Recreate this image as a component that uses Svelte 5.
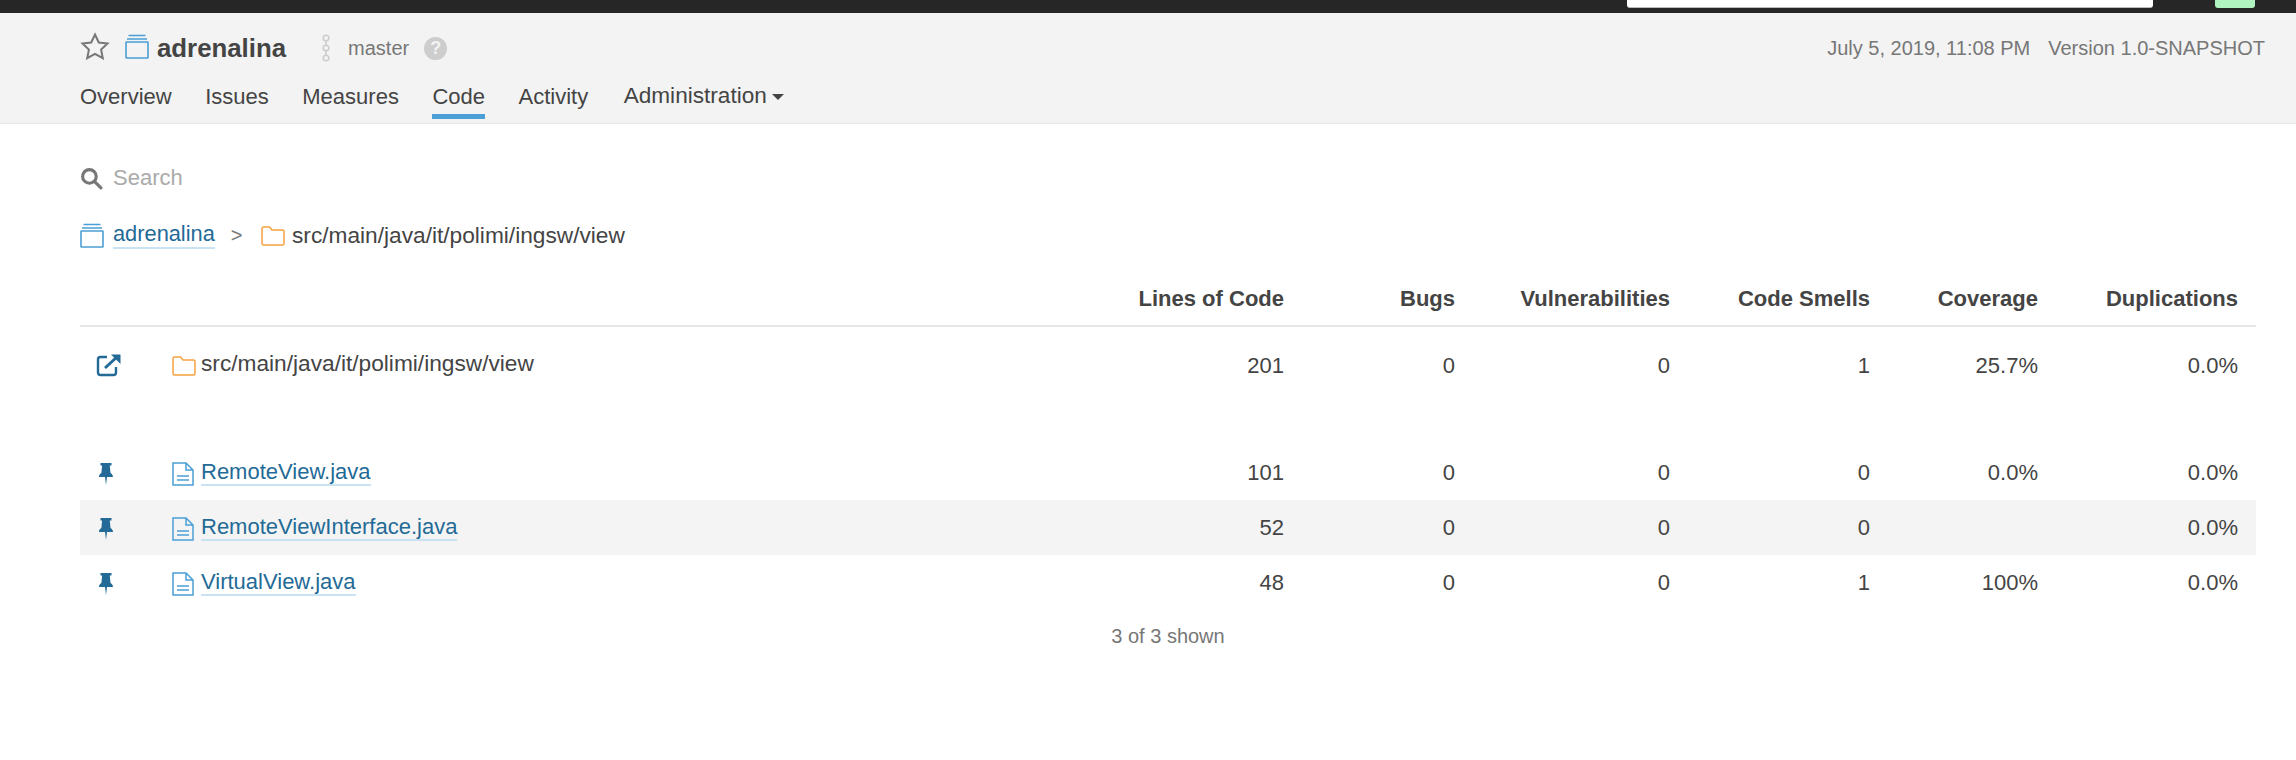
<script>
  const cols = ["Lines of Code", "Bugs", "Vulnerabilities", "Code Smells", "Coverage", "Duplications"];
  const files = [
    { name: "RemoteView.java", vals: ["101", "0", "0", "0", "0.0%", "0.0%"] },
    { name: "RemoteViewInterface.java", vals: ["52", "0", "0", "0", "", "0.0%"] },
    { name: "VirtualView.java", vals: ["48", "0", "0", "1", "100%", "0.0%"] },
  ];
  const tabs = ["Overview", "Issues", "Measures", "Code", "Activity"];
</script>

{#snippet projectIcon(color)}
  <svg class="ico" width="24" height="26" viewBox="0 0 24 26" fill="none" stroke={color} stroke-width="1.6">
    <rect x="1" y="9" width="22" height="16" rx="0.5" />
    <path d="M2 6h20M3.500 2.500h17" />
  </svg>
{/snippet}

{#snippet folderIcon()}
  <svg class="ico" width="24" height="24" viewBox="0 0 24 24" fill="none" stroke="#f5a23e" stroke-width="1.5">
    <path d="M1 5.500a1.500 1.500 0 0 1 1.500-1.500h6l2.500 3h10.500a1.500 1.500 0 0 1 1.500 1.500v12a1.500 1.500 0 0 1-1.500 1.500h-19a1.500 1.500 0 0 1-1.500-1.500z" />
  </svg>
{/snippet}

{#snippet fileIcon()}
  <svg class="ico" width="22" height="24" viewBox="0 0 22 24" fill="none" stroke="#4b9fd5" stroke-width="1.500">
    <path d="M1 1h13l7 7v15H1zM14 1v7h7" />
    <path d="M5 14h12M5 18h12" />
  </svg>
{/snippet}

{#snippet pinIcon()}
  <svg class="ico" width="16" height="24" viewBox="0 0 16 24" fill="#236a97">
    <path d="M2.500 1h11v2.500h-1.700l.7 7.500c1.600 1 2.500 2.500 2.500 4H.9c0-1.500.9-3 2.500-4l.7-7.500H2.500zM7 15h2l-1 8z" />
  </svg>
{/snippet}

<div class="topbar">
  <div class="searchbox"></div>
  <div class="greenbtn"></div>
</div>

<header class="navbar">
  <div class="navhead">
    <div class="crumbs">
      <svg class="star" width="30" height="28" viewBox="0 0 30 28" fill="none" stroke="#777" stroke-width="2">
        <path d="M15 2.500l3.800 8 8.700 1.100-6.400 6 1.700 8.600-7.800-4.300-7.800 4.300 1.700-8.600-6.400-6 8.700-1.100z" />
      </svg>
      {@render projectIcon("#4b9fd5")}
      <strong class="project">adrenalina</strong>
      <svg class="branch" width="10" height="28" viewBox="0 0 10 28" fill="none" stroke="#ccc" stroke-width="1.500">
        <circle cx="5" cy="4" r="2.800" />
        <circle cx="5" cy="14" r="2.800" />
        <circle cx="5" cy="24" r="2.800" />
        <path d="M5 7v4M5 17v4" />
      </svg>
      <span class="branchname">master</span>
      <span class="help">?</span>
    </div>
    <div class="meta">
      <span>July 5, 2019, 11:08 PM</span>
      <span>Version 1.0-SNAPSHOT</span>
    </div>
  </div>
  <nav class="tabs">
    {#each tabs as t}
      <span class="tab" class:active={t === "Code"}>{t}</span>
    {/each}
    <span class="tab admin">Administration <i class="caret"></i></span>
  </nav>
</header>

<main class="page">
  <div class="search">
    <svg width="23" height="23" viewBox="0 0 22 22" fill="none" stroke="#777" stroke-width="3">
      <circle cx="9" cy="9" r="6.500" />
      <path d="M14 14l6 6" stroke-linecap="round" />
    </svg>
    <span>Search</span>
  </div>

  <div class="path">
    {@render projectIcon("#4b9fd5")}
    <a href="#top">adrenalina</a>
    <span class="sep">&gt;</span>
    {@render folderIcon()}
    <span class="longpath">src/main/java/it/polimi/ingsw/view</span>
  </div>

  <table>
    <colgroup>
      <col class="c-pin" />
      <col />
      <col class="c1" />
      <col class="c2" />
      <col class="c3" />
      <col class="c4" />
      <col class="c5" />
      <col class="c6" />
    </colgroup>
    <thead>
      <tr>
        <th></th>
        <th></th>
        {#each cols as c}
          <th>{c}</th>
        {/each}
      </tr>
    </thead>
    <tbody>
      <tr class="base">
        <td class="pin ext">
          <svg class="ico" width="26" height="24" viewBox="0 0 26 24" fill="none" stroke="#236a97" stroke-width="2.400">
            <path d="M11 4H4.500A2.500 2.500 0 0 0 2 6.500v13A2.500 2.500 0 0 0 4.500 22h13a2.500 2.500 0 0 0 2.500-2.500V14" />
            <path d="M9 15L22 3" stroke-width="3" />
            <path d="M15 1.500h9.500V11z" fill="#236a97" stroke="none" />
          </svg>
        </td>
        <td class="name">{@render folderIcon()}<span class="longpath">src/main/java/it/polimi/ingsw/view</span></td>
        <td>201</td><td>0</td><td>0</td><td>1</td><td>25.7%</td><td>0.0%</td>
      </tr>
      <tr class="spacer"><td colspan="8"></td></tr>
      {#each files as f, i}
        <tr class:striped={i === 1}>
          <td class="pin">{@render pinIcon()}</td>
          <td class="name">{@render fileIcon()}<a href="#top">{f.name}</a></td>
          {#each f.vals as v}
            <td>{v}</td>
          {/each}
        </tr>
      {/each}
    </tbody>
  </table>

  <div class="shown">3 of 3 shown</div>
</main>

<style>
  :global(body) {
    margin: 0;
    background: #fff;
    font-family: "Liberation Sans", Arial, sans-serif;
    color: #444;
    font-size: 20px;
  }

  .topbar {
    height: 13px;
    background: #262626;
    display: flex;
    justify-content: flex-end;
    padding-right: 41px;
    overflow: hidden;
  }

  .searchbox {
    width: 526px;
    height: 7px;
    background: #fff;
    border-bottom: 1px solid #bbb;
    border-radius: 0 0 3px 3px;
    margin-right: 62px;
  }

  .greenbtn {
    width: 40px;
    height: 8px;
    background: #b0f2c0;
    border-radius: 0 0 3px 3px;
  }

  .navbar {
    background: #f3f3f3;
    border-bottom: 1px solid #e6e6e6;
    padding: 0 31px 0 80px;
    height: 110px;
  }

  .navhead {
    display: flex;
    justify-content: space-between;
    padding-top: 16px;
    height: 38px;
  }

  .crumbs {
    display: flex;
    align-items: center;
  }

  .star {
    margin-right: 15px;
    margin-top: -5px;
  }

  .crumbs .ico { margin-top: -4px; }

  .project {
    font-size: 25.8px;
    color: #444;
    margin-left: 8px;
  }

  .branch { margin-left: 35px; }

  .branchname {
    margin-left: 17px;
    color: #777;
  }

  .help {
    width: 23px;
    height: 23px;
    margin-left: 15px;
    border-radius: 50%;
    background: #cdcdcd;
    color: #f3f3f3;
    font-weight: bold;
    font-size: 18px;
    display: flex;
    align-items: center;
    justify-content: center;
  }

  .meta {
    display: flex;
    gap: 18px;
    color: #777;
    align-items: flex-start;
    padding-top: 8px;
  }

  .tabs {
    display: flex;
    gap: 33.5px;
    margin-top: 11px;
    font-size: 22px;
    color: #444;
  }

  .tab {
    height: 34px;
    line-height: 34px;
    padding-top: 2px;
  }

  .tab.active {
    border-bottom: 5px solid #4b9fd5;
  }

  .admin {
    font-size: 22.6px;
    line-height: 32px;
    margin-left: 2px;
  }

  .caret {
    display: inline-block;
    width: 0;
    height: 0;
    margin-left: -1px;
    vertical-align: 3px;
    border-left: 6.500px solid transparent;
    border-right: 6.500px solid transparent;
    border-top: 6.500px solid #444;
  }

  .page {
    padding: 0 40px 0 80px;
  }

  .search {
    display: flex;
    align-items: center;
    gap: 10px;
    padding-top: 42px;
    height: 24px;
    color: #aaa;
    font-size: 22px;
  }

  .path {
    display: flex;
    align-items: center;
    margin-top: 31px;
    font-size: 21.8px;
    color: #444;
  }

  .path .ico { margin-right: 7.5px; }

  .path .ico:first-child { margin-right: 9px; }

  a {
    color: #236a97;
    text-decoration: none;
    border-bottom: 2px solid #cae3f2;
  }

  .longpath { font-size: 22.7px; }

  .sep {
    margin: 0 18px 0 16px;
    color: #777;
    font-size: 20px;
  }

  table {
    width: 100%;
    table-layout: fixed;
    border-collapse: collapse;
    margin-top: 24px;
    font-size: 22px;
  }

  .c-pin { width: 92px; }
  .c1 { width: 200px; }
  .c2 { width: 171px; }
  .c3 { width: 215px; }
  .c4 { width: 200px; }
  .c5 { width: 168px; }
  .c6 { width: 202px; }

  th {
    text-align: right;
    font-weight: bold;
    padding: 0 16px 0 0;
    height: 52px;
    border-bottom: 2px solid #e6e6e6;
    white-space: nowrap;
    vertical-align: middle;
  }

  td {
    text-align: right;
    padding: 0 16px 0 0;
    height: 55px;
    white-space: nowrap;
  }

  th:last-child,
  td:last-child { padding-right: 18px; }

  .base td { height: 78px; }
  .base td.pin,
  .base td.name {
    height: 73px;
    padding-bottom: 5px;
  }
  .spacer td { height: 40px; }

  td.pin {
    text-align: left;
    padding-left: 18px;
  }

  td.pin .ico { vertical-align: middle; }

  td.ext { padding-left: 16px; }

  td.name {
    text-align: left;
  }

  td.name .ico {
    margin-right: 7px;
    vertical-align: middle;
  }

  td.name .longpath { margin-left: -2px; }

  .striped td { background: #f4f4f4; }

  .ico { flex: none; }

  .shown {
    text-align: center;
    color: #777;
    margin-top: 15px;
  }
</style>
